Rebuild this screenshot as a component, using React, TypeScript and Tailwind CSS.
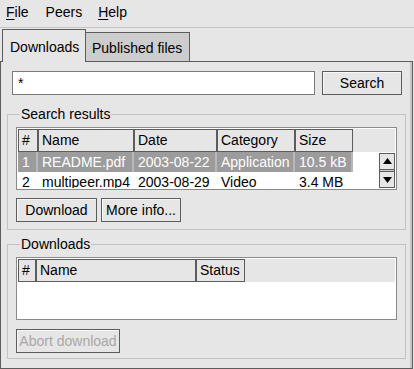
import React from 'react';

type Col = { label: string; w: string };

const resultCols: Col[] = [
  { label: '#', w: 'w-[20px]' },
  { label: 'Name', w: 'w-[96px]' },
  { label: 'Date', w: 'w-[83px]' },
  { label: 'Category', w: 'w-[78px]' },
  { label: 'Size', w: 'w-[58px]' },
];

const downloadCols: Col[] = [
  { label: '#', w: 'w-[18px]' },
  { label: 'Name', w: 'w-[160px]' },
  { label: 'Status', w: 'w-[49px]' },
];

const results = [
  { cells: ['1', 'README.pdf', '2003-08-22', 'Application', '10.5 kB'], selected: true },
  { cells: ['2', 'multipeer.mp4', '2003-08-29', 'Video', '3.4 MB'], selected: false },
];

const Button = ({ children, disabled, className = '' }: { children: React.ReactNode; disabled?: boolean; className?: string }) => (
  <button
    className={`h-[24px] whitespace-nowrap border border-[#5c5c5c] bg-[#e6e6e6] px-0 text-center leading-[20px] shadow-[inset_1px_1px_0_#f8f8f8] ${
      disabled ? 'text-[#a8a8a8]' : 'text-black'
    } ${className}`}
  >
    {children}
  </button>
);

const HeaderRow = ({ cols }: { cols: Col[] }) => (
  <div className="flex h-[23px] bg-[#e6e6e6]">
    {cols.map((c) => (
      <div
        key={c.label}
        className={`${c.w} shrink-0 overflow-hidden whitespace-nowrap border border-[#5c5c5c] pl-[3px] leading-[21px]`}
      >
        {c.label}
      </div>
    ))}
  </div>
);

const Arrow = ({ up }: { up?: boolean }) => (
  <div className="flex h-[17px] items-center justify-center border border-[#5c5c5c] bg-[#e6e6e6]">
    <svg width="9" height="6" viewBox="0 0 9 6">
      {up ? <polygon points="0,6 9,6 4.5,0" fill="#000" /> : <polygon points="0,0 9,0 4.5,6" fill="#000" />}
    </svg>
  </div>
);

const Group = ({ title, children, className = '' }: { title: string; children: React.ReactNode; className?: string }) => (
  <fieldset className={`mx-[6px] border border-[#c2c2c2] px-[8px] ${className}`}>
    <legend className="ml-[4px] px-[1px] leading-[16px]">{title}</legend>
    {children}
  </fieldset>
);

export default function App() {
  return (
    <div className="flex h-[369px] w-[414px] flex-col overflow-hidden bg-[#e6e6e6] font-['Liberation_Sans',Arial,sans-serif] text-[14px] text-black">
      {/* Menu bar */}
      <div className="flex h-[28px] shrink-0 items-center border-b border-[#c4c4c4] pb-[2px] pl-[6px]">
        <span className="mr-[17px]"><span className="underline underline-offset-2">F</span>ile</span>
        <span className="mr-[16px]">Peers</span>
        <span><span className="underline underline-offset-2">H</span>elp</span>
      </div>

      {/* Tabs */}
      <div className="relative z-10 mt-[1px] flex items-end pl-[2px]">
        <div className="-mb-px h-[33px] w-[84px] border border-b-0 border-[#5c5c5c] bg-[#e6e6e6] pl-[7px] pt-[7px]">
          Downloads
        </div>
        <div className="h-[29px] w-[104px] border border-b-0 border-l-0 border-[#5c5c5c] bg-[#cdcdcd] pl-[6px] pt-[5px]">
          Published files
        </div>
      </div>

      {/* Tab panel */}
      <div className="flex h-[308px] w-[413px] flex-col border border-[#5c5c5c] shadow-[inset_-2px_0_0_#c8c8c8]">
        <div className="mt-[9px] flex items-center pl-[11px]">
          <div className="h-[24px] w-[303px] border border-[#7a7a7a] bg-white pl-[5px] leading-[22px]">*</div>
          <Button className="ml-[7px] w-[80px]">Search</Button>
        </div>

        <Group title="Search results" className="mt-[11px] h-[124px]">
          <div className="mt-[5px] border border-[#8a8a8a] bg-white p-px">
            <HeaderRow cols={resultCols} />
            <div className="flex h-[36px] overflow-hidden">
              <div className="flex flex-col">
                {results.map((r) => (
                  <div key={r.cells[0]} className={`flex h-[20px] shrink-0 ${r.selected ? 'bg-[#9c9c9c] text-white' : 'bg-white'}`}>
                    {r.cells.map((cell, i) => (
                      <div
                        key={i}
                        className={`${resultCols[i].w} shrink-0 whitespace-nowrap pl-[4px] leading-[21px] ${
                          r.selected ? 'border-r-2 border-[#b8b8b8]' : ''
                        }`}
                      >
                        {cell}
                      </div>
                    ))}
                  </div>
                ))}
              </div>
              <div className="flex-1" />
              <div className="mt-px flex w-[16px] flex-col">
                <Arrow up />
                <div className="h-[2px] border-x border-[#5c5c5c] bg-[#c8c8c8]" />
                <Arrow />
              </div>
            </div>
          </div>
          <div className="mt-[8px] flex gap-[4px]">
            <Button className="w-[81px]">Download</Button>
            <Button className="w-[80px]">More info...</Button>
          </div>
        </Group>

        <Group title="Downloads" className="mt-[6px] h-[123px]">
          <div className="mt-[5px] border border-[#8a8a8a] bg-white p-px">
            <HeaderRow cols={downloadCols} />
            <div className="h-[36px]" />
          </div>
          <Button disabled className="mt-[9px] w-[104px]">Abort download</Button>
        </Group>
      </div>
    </div>
  );
}
